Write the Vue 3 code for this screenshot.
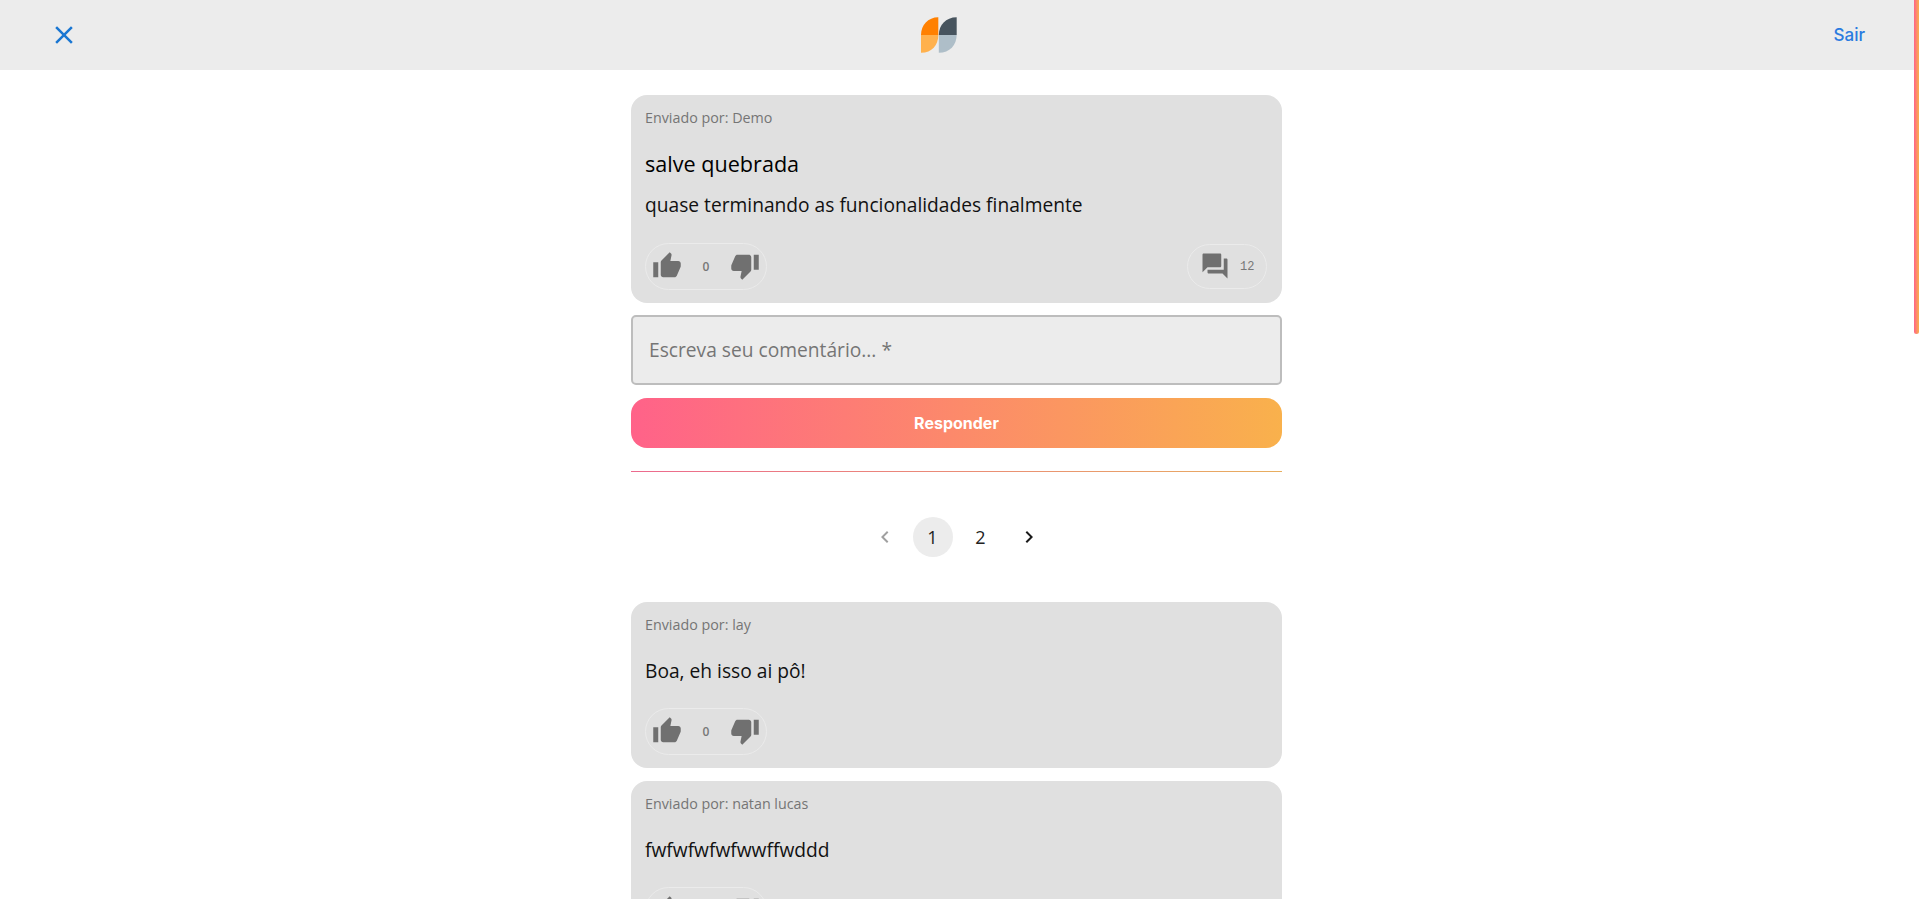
<script setup>
const comments = [
  { id: 1, author: 'lay', text: 'Boa, eh isso ai pô!' },
  { id: 2, author: 'natan lucas', text: 'fwfwfwfwfwwffwddd' },
]
const up = 'M1 21h4V9H1v12zm22-11c0-1.1-.9-2-2-2h-6.31l.95-4.57.03-.32c0-.41-.17-.79-.44-1.06L14.17 1 7.59 7.59C7.22 7.95 7 8.45 7 9v10c0 1.1.9 2 2 2h9c.83 0 1.54-.5 1.84-1.22l3.02-7.05c.09-.23.14-.47.14-.73v-2z'
const down = 'M15 3H6c-.83 0-1.54.5-1.84 1.22l-3.02 7.05c-.09.23-.14.47-.14.73v2c0 1.1.9 2 2 2h6.31l-.95 4.57-.03.32c0 .41.17.79.44 1.06L9.83 23l6.59-6.59c.36-.36.58-.86.58-1.41V5c0-1.1-.9-2-2-2zm4 0v12h4V3h-4z'
const forum = 'M21 6h-2v9H6v2c0 .55.45 1 1 1h11l4 4V7c0-.55-.45-1-1-1zm-4 6V3c0-.55-.45-1-1-1H3c-.55 0-1 .45-1 1v14l4-4h10c.55 0 1-.45 1-1z'
</script>

<template>
  <div class="page">
    <header class="topbar">
      <button class="close" aria-label="Fechar">
        <svg viewBox="0 0 24 24" width="30" height="30"><path d="M19 6.41L17.59 5 12 10.59 6.41 5 5 6.41 10.59 12 5 17.59 6.41 19 12 13.41 17.59 19 19 17.59 13.41 12z" /></svg>
      </button>
      <svg class="logo" viewBox="0 0 36 36" width="36" height="36">
        <path d="M17.5 0V18H0C0 8 7 0 17.5 0Z" fill="#ff8000" />
        <path d="M0 18H17.5C17.5 28 11 36 0 36Z" fill="#ffb14d" />
        <path d="M18 18C18 8 25 0 36 0V18Z" fill="#47545e" />
        <path d="M18 18H36C36 28 29 36 18 36Z" fill="#aebec8" />
      </svg>
      <a class="logout">Sair</a>
    </header>

    <main class="column">
      <article class="card">
        <div class="meta">Enviado por: Demo</div>
        <h2 class="title">salve quebrada</h2>
        <p class="body first">quase terminando as funcionalidades finalmente</p>
        <div class="actions">
          <div class="pill votes">
            <svg viewBox="0 0 24 24" width="30" height="30"><path :d="up" /></svg>
            <span class="count">0</span>
            <svg viewBox="0 0 24 24" width="30" height="30"><path :d="down" /></svg>
          </div>
          <div class="pill replies">
            <svg viewBox="0 0 24 24" width="30" height="30"><path :d="forum" /></svg>
            <span class="count num">12</span>
          </div>
        </div>
      </article>

      <input class="field" placeholder="Escreva seu comentário... *" />
      <button class="submit">Responder</button>
      <div class="divider"></div>

      <nav class="pager">
        <span class="pg off"><svg viewBox="0 0 24 24" width="24" height="24"><path d="M15.41 7.41L14 6l-6 6 6 6 1.41-1.41L10.83 12z" /></svg></span>
        <span class="pg on">1</span>
        <span class="pg">2</span>
        <span class="pg"><svg viewBox="0 0 24 24" width="24" height="24"><path d="M10 6L8.59 7.41 13.17 12l-4.58 4.59L10 18l6-6z" /></svg></span>
      </nav>

      <article v-for="c in comments" :key="c.id" class="card reply">
        <div class="meta">Enviado por: {{ c.author }}</div>
        <p class="body">{{ c.text }}</p>
        <div class="actions">
          <div class="pill votes">
            <svg viewBox="0 0 24 24" width="30" height="30"><path :d="up" /></svg>
            <span class="count">0</span>
            <svg viewBox="0 0 24 24" width="30" height="30"><path :d="down" /></svg>
          </div>
        </div>
      </article>
    </main>
    <div class="scrollthumb"></div>
  </div>
</template>

<style scoped>
.page {
  font-family: "Open Sans", "Liberation Sans", sans-serif;
  color: #111;
  margin-right: 5px;
}
.scrollthumb {
  position: fixed;
  top: 0;
  right: 0;
  width: 5px;
  height: 334px;
  border-radius: 0 0 3px 3px;
  background: linear-gradient(90deg, #ff6289, #f9b14c);
}
.topbar {
  height: 70px;
  background: #ececec;
  display: flex;
  align-items: center;
  padding: 0 49px;
  gap: 842px;
}
.close {
  width: 30px;
  height: 30px;
  padding: 0;
  border: 0;
  background: none;
  display: flex;
}
.close svg { fill: #1976d2; }
.logo { display: block; }
.logout {
  width: 67px;
  margin-left: auto;
  text-align: right;
  font-family: Inter, sans-serif;
  font-size: 17px;
  font-weight: 500;
  color: #2a7be0;
}
.column {
  width: 651px;
  margin-left: calc(50% - 326px);
  padding: 25px 0 40px;
  display: flex;
  flex-direction: column;
}
.card {
  background: #e0e0e0;
  border-radius: 16px;
  padding: 13px 15px 13px 14px;
  display: flex;
  flex-direction: column;
}
.reply { margin-bottom: 13px; }
.meta {
  font-size: 14.3px;
  line-height: 20px;
  color: #757575;
}
.title {
  margin: 23px 0 0;
  font-size: 21.6px;
  line-height: 26px;
  font-weight: 400;
  color: #000;
}
.body {
  margin: 23px 0 0;
  font-size: 19.2px;
  line-height: 26px;
  color: #111;
}
.body.first { margin: 15px 0 1px; }
.actions {
  margin-top: 24px;
  display: flex;
  justify-content: space-between;
  align-items: center;
}
.pill {
  box-sizing: border-box;
  border: 1px solid #ebebeb;
  border-radius: 24px;
  display: flex;
  align-items: center;
}
.pill svg {
  fill: #707070;
  display: block;
  margin-bottom: 2px;
}
.votes {
  width: 122px;
  height: 47px;
  padding: 0 6px;
  justify-content: space-between;
}
.replies {
  width: 80px;
  height: 45px;
  padding: 0 0 0 12px;
  gap: 10px;
}
.count {
  font-size: 12px;
  font-weight: 600;
  color: #777;
}
.count.num {
  font-family: "Liberation Mono", monospace;
  font-weight: 400;
}
.field {
  box-sizing: border-box;
  height: 70px;
  margin-top: 12px;
  padding: 0 16px 2px;
  background: #ececec;
  border: 2px solid #bdbdbd;
  border-radius: 5px;
  font-family: inherit;
  font-size: 19.2px;
  outline: none;
}
.field::placeholder { color: #757575; opacity: 1; }
.submit {
  height: 50px;
  margin-top: 13px;
  border: 0;
  border-radius: 16px;
  background: linear-gradient(90deg, #ff6289, #f9b14c);
  color: #fff;
  font-family: Inter, sans-serif;
  font-size: 16px;
  font-weight: 700;
}
.divider {
  height: 1px;
  margin-top: 23px;
  background: linear-gradient(90deg, #ec6a8e, #e8ae5f);
}
.pager {
  display: flex;
  justify-content: center;
  gap: 8px;
  margin: 45px 0 45px;
}
.pg {
  width: 40px;
  height: 40px;
  border-radius: 50%;
  display: flex;
  align-items: center;
  justify-content: center;
  font-size: 18px;
  color: #222;
}
.pg svg { fill: #1a1a1a; }
.pg.off svg { fill: #a0a0a0; }
.pg.on { background: #ececec; }
</style>
